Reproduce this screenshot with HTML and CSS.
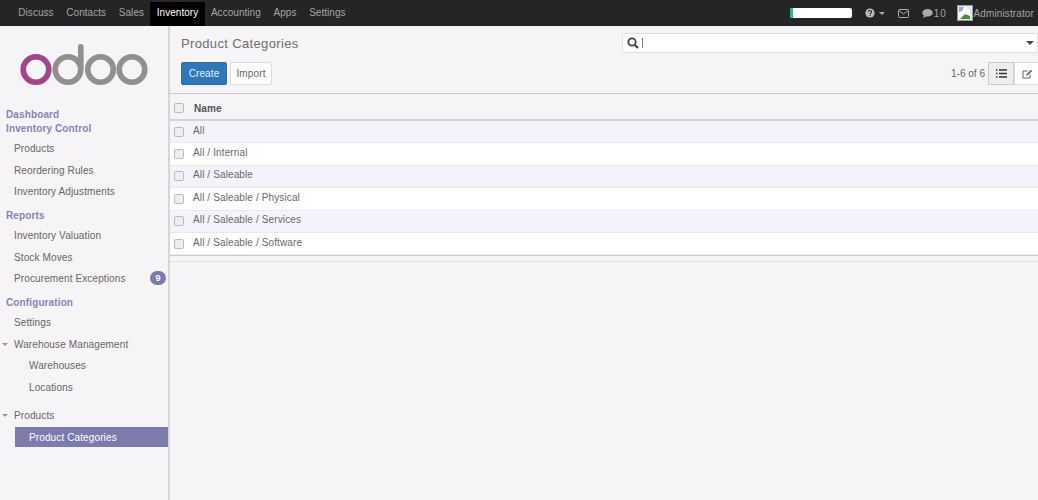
FILE: index.html
```html
<!DOCTYPE html>
<html lang="en">
<head>
<meta charset="utf-8">
<title>Product Categories</title>
<link rel="stylesheet" href="styles.css">
</head>
<body>
<nav class="topbar">
  <ul class="apps">
    <li>Discuss</li><li>Contacts</li><li>Sales</li><li class="on">Inventory</li><li>Accounting</li><li>Apps</li><li>Settings</li>
  </ul>
  <div class="systray">
    <div class="progress"><span class="fill"></span></div>
    <div class="help">
      <svg width="10" height="10" viewBox="0 0 10 10"><circle cx="5" cy="5" r="4.6" fill="#bbb"/><path d="M3.4 3.9C3.5 2.9 4.2 2.5 5 2.5s1.6.5 1.6 1.3c0 1.1-1.4 1.1-1.4 2.1" fill="none" stroke="#222" stroke-width="1.1"/><rect x="4.5" y="6.6" width="1.3" height="1.2" fill="#222"/></svg>
      <span class="caret"></span>
    </div>
    <svg class="mail" width="11" height="9" viewBox="0 0 11 9"><rect x=".5" y=".5" width="10" height="8" rx="1" fill="none" stroke="#aaa"/><path d="M.8 1.5 5.5 5l4.7-3.5" fill="none" stroke="#aaa"/></svg>
    <div class="chat">
      <svg width="11" height="9" viewBox="0 0 11 9"><ellipse cx="5.5" cy="3.8" rx="5.2" ry="3.7" fill="#aaa"/><path d="M2 6 1.200 9 5 7z" fill="#aaa"/></svg>
      <span>10</span>
    </div>
    <div class="user">
      <svg width="16" height="16" viewBox="0 0 16 16"><rect x=".5" y=".5" width="15" height="15" fill="#e8e8e8" stroke="#999"/><path d="M2 2h7l4 3v9H2z" fill="#fff"/><path d="M3 14l5-5 5 2v3z" fill="#4c8a3a"/><path d="M2 2h5l-2 4-3 1z" fill="#8fa9c9"/></svg>
      <span>Administrator</span>
    </div>
  </div>
</nav>
<div class="main">
  <aside class="sidebar">
    <div class="logo">
      <svg width="130" height="44" viewBox="0 0 130 44">
        <circle cx="16" cy="27.500" r="12.800" fill="none" stroke="#a24689" stroke-width="5.600"/>
        <circle cx="48" cy="27.500" r="12.800" fill="none" stroke="#909090" stroke-width="5.600"/>
        <rect x="58" y="2" width="5.600" height="26" rx="2.800" fill="#909090"/>
        <circle cx="80.500" cy="27.500" r="12.800" fill="none" stroke="#909090" stroke-width="5.600"/>
        <circle cx="112" cy="27.500" r="12.800" fill="none" stroke="#909090" stroke-width="5.600"/>
      </svg>
    </div>
    <div class="head first">Dashboard</div>
    <div class="head second">Inventory Control</div>
    <a class="item">Products</a>
    <a class="item">Reordering Rules</a>
    <a class="item">Inventory Adjustments</a>
    <div class="head">Reports</div>
    <a class="item">Inventory Valuation</a>
    <a class="item">Stock Moves</a>
    <a class="item">Procurement Exceptions<span class="badge">9</span></a>
    <div class="head">Configuration</div>
    <a class="item">Settings</a>
    <a class="item"><span class="tri"></span>Warehouse Management</a>
    <a class="item sub">Warehouses</a>
    <a class="item sub">Locations</a>
    <a class="item gap"><span class="tri"></span>Products</a>
    <a class="item sub active">Product Categories</a>
  </aside>
  <section class="content">
    <div class="panel">
      <div class="panel-top">
        <h1>Product Categories</h1>
        <div class="search">
          <svg width="12" height="12" viewBox="0 0 12 12"><circle cx="5" cy="5" r="3.700" fill="none" stroke="#444" stroke-width="1.800"/><path d="M7.700 7.700 11 11" stroke="#444" stroke-width="2.200"/></svg>
          <span class="cursor"></span>
          <span class="caret dark"></span>
        </div>
      </div>
      <div class="panel-bottom">
        <div class="buttons">
          <button class="btn primary">Create</button>
          <button class="btn">Import</button>
        </div>
        <div class="pager">
          <span>1-6 of 6</span>
          <div class="views">
            <div class="view on">
              <svg width="11" height="9" viewBox="0 0 11 9"><path d="M0 1h1.500M3 1h8M0 4.500h1.500M3 4.500h8M0 8h1.500M3 8h8" stroke="#333" stroke-width="1.500"/></svg>
            </div>
            <div class="view">
              <svg width="11" height="10" viewBox="0 0 11 10"><path d="M8 5.500V9H1V2h4.500" fill="none" stroke="#666"/><path d="M4 6.800 4.500 5 9 .8l1.300 1.300L5.800 6.300z" fill="#666"/></svg>
            </div>
          </div>
        </div>
      </div>
    </div>
    <div class="table">
      <div class="row header"><span class="check"></span><span class="name">Name</span></div>
      <div class="row odd"><span class="check"></span><span class="cell">All</span></div>
      <div class="row"><span class="check"></span><span class="cell">All / Internal</span></div>
      <div class="row odd"><span class="check"></span><span class="cell">All / Saleable</span></div>
      <div class="row"><span class="check"></span><span class="cell">All / Saleable / Physical</span></div>
      <div class="row odd"><span class="check"></span><span class="cell">All / Saleable / Services</span></div>
      <div class="row"><span class="check"></span><span class="cell">All / Saleable / Software</span></div>
      <div class="footer"></div>
    </div>
  </section>
</div>
</body>
</html>
```
FILE: styles.css
```css
* { box-sizing: border-box; }
html, body { margin: 0; height: 100%; overflow: hidden; }
body {
  font-family: "Liberation Sans", Arial, sans-serif;
  font-size: 10px;
  letter-spacing: .12px;
  color: #666;
  background: #f6f4f6;
  display: flex;
  flex-direction: column;
}
.topbar {
  height: 26px;
  flex: none;
  background: #252525;
  display: flex;
  justify-content: space-between;
  color: #a4a4a4;
  padding-left: 12px;
}
.apps { display: flex; list-style: none; margin: 0; padding: 0; letter-spacing: .04px; }
.apps li { padding: 0 6.350px; line-height: 25px; }
.apps li.on { background: #000; color: #fff; height: 24px; margin-top: 2px; line-height: 21px; }
.systray { display: flex; align-items: center; padding-right: 4px; }
.progress { width: 62px; height: 10px; background: #fff; border-radius: 2px; overflow: hidden; margin-right: 13px; }
.fill { display: block; width: 3px; height: 100%; background: #21b799; }
.help { display: flex; align-items: center; gap: 4px; margin-right: 13px; }
.caret { width: 0; height: 0; border: 3px solid transparent; border-top-color: #aaa; border-bottom: 0; }
.caret.dark { border-width: 4px 4px 0; border-top-color: #444; margin-left: auto; margin-right: 3px; }
.mail { margin-right: 13px; }
.chat { display: flex; align-items: center; gap: 1px; margin-right: 10px; letter-spacing: .8px; }
.user { display: flex; align-items: center; gap: 1px; }
.main { flex: 1; display: flex; min-height: 0; }
.sidebar {
  width: 170px;
  flex: none;
  background: #f6f4f6;
  border-right: 2px solid #d6d6d6;
}
.logo { height: 71.500px; padding: 16px 0 0 20px; }
.logo svg { display: block; }
.head { color: #8a82b8; font-weight: bold; padding-left: 6px; height: 22px; padding-top: 3px; line-height: 19px; }
.head.first { height: 14px; line-height: 14px; margin-top: 10px; padding-top: 0; }
.head.second { height: 14px; line-height: 14px; margin-bottom: 2px; padding-top: 0; }
.item { display: flex; align-items: center; height: 21.700px; padding-left: 14px; position: relative; color: #666; }
.item.sub { margin-left: 15px; padding-left: 14px; }
.item.gap { margin-top: 6px; }
.item.active { background: #7c7bad; color: #fff; height: 20px; margin-top: 1px; }
.tri { position: absolute; left: 2px; top: 10px; width: 0; height: 0; border: 3px solid transparent; border-top-color: #999; border-bottom: 0; }
.badge { position: absolute; right: 2px; top: 3px; width: 16px; height: 14px; border-radius: 7px; background: #7c7bad; color: #fff; font-size: 9px; font-weight: bold; text-align: center; line-height: 14px; }
.content { flex: 1; min-width: 0; display: flex; flex-direction: column; }
.panel { height: 68px; padding: 7px 0 0 11px; border-bottom: 1px solid #c9c9c9; }
.panel-top { display: flex; justify-content: space-between; height: 29px; }
h1 { margin: 0; padding-top: 1px; font-size: 13px; font-weight: normal; color: #6f6f6f; line-height: 20px; letter-spacing: .35px; }
.search {
  width: 416px;
  height: 20px;
  background: #fff;
  border: 1px solid #e0e0e0;
  border-radius: 2px;
  display: flex;
  align-items: center;
  padding-left: 4px;
  gap: 3px;
}
.cursor { width: 1px; height: 10px; background: #777; }
.panel-bottom { display: flex; justify-content: space-between; }
.buttons { display: flex; gap: 3px; }
.btn {
  height: 23px;
  width: 42px;
  padding: 0;
  font: inherit;
  letter-spacing: inherit;
  color: #666;
  background: #fff;
  border: 1px solid #ddd;
  border-radius: 2px;
}
.btn.primary { background: #2d78b8; color: #e8f0f7; border-color: #2a6fa9; width: 46px; }
.pager { display: flex; align-items: center; gap: 3px; height: 23px; letter-spacing: 0; }
.views { display: flex; width: 50px; }
.view { width: 26px; height: 23px; flex: none; display: flex; align-items: center; justify-content: center; background: #fff; border: 1px solid #ddd; }
.view.on { background: #eee; border-color: #ccc; }
.table { background: #f6f4f6; }
.row { display: flex; align-items: center; height: 22.400px; border-bottom: 1px solid #eaeaea; background: #fff; padding-left: 4px; color: #6a6a6a; }
.row.odd { background: #f3f3fb; }
.row.header { height: 27px; background: #f6f4f6; border-bottom: 2px solid #d4d4d4; }
.check { width: 10px; height: 10px; border: 1px solid #bbb; border-radius: 2px; background: #eee; flex: none; }
.row.header .check { margin-top: 2px; }
.row .cell { margin-left: 9px; margin-bottom: 3px; }
.name { margin-left: 10px; margin-top: 3px; font-weight: bold; color: #555; }
.footer { height: 7px; border-top: 1px solid #ccc; border-bottom: 1px solid #e0e0e0; background: #f6f4f6; }
```
